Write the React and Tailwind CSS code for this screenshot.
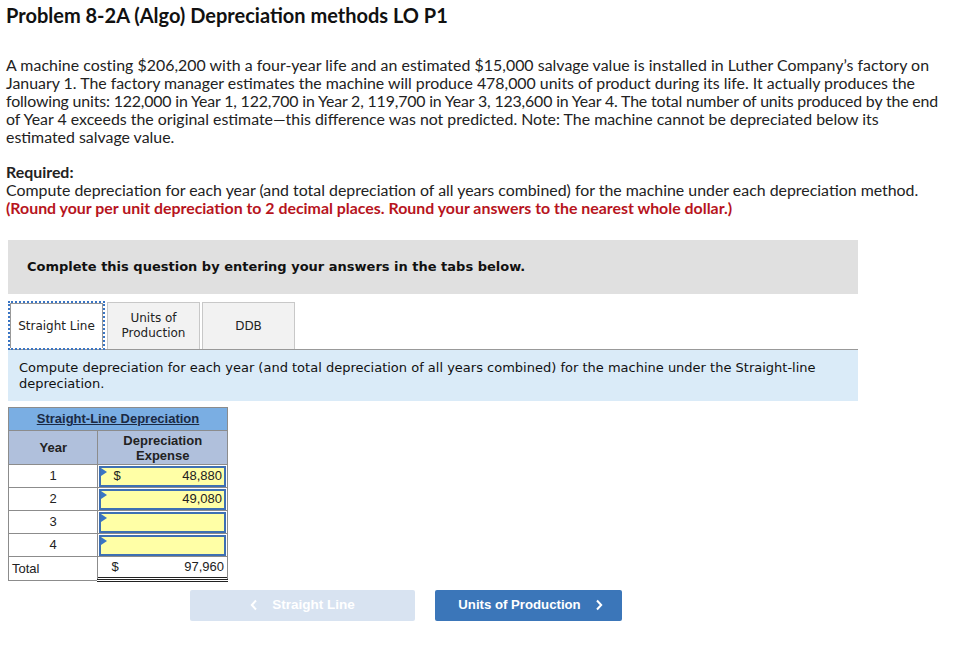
import React from "react";

const proxima = { fontFamily: "Lato, 'Open Sans', sans-serif" };

function Marker() {
  return (
    <span className="absolute left-0 top-0 w-0 h-0 border-t-[4px] border-b-[4px] border-l-[6px] border-t-transparent border-b-transparent border-l-[#3a75c4]" />
  );
}

function InputCell({ dollar, value }) {
  return (
    <td className="relative p-0 border border-[#8c8c8c] h-[23px]">
      <div className="relative mx-[1px] h-[21px] bg-[#ffffa6] border-2 border-[#3e70b3] flex items-center justify-between px-[12px] pr-[2px]">
        <Marker />
        <span>{dollar ? "$" : ""}</span>
        <span>{value}</span>
      </div>
    </td>
  );
}

export default function App() {
  return (
    <div className="bg-white w-[958px] h-[668px] text-[#222]">
      <div className="px-[6px] pt-[3px]" style={proxima}>
        <h1 className="text-[20px] font-bold text-[#111] leading-[24px]">
          Problem 8-2A (Algo) Depreciation methods LO P1
        </h1>
        <div className="mt-[29px] text-[15.9px] leading-[18px] text-[#222] whitespace-nowrap">
          <div className="tracking-[0.03px]">A machine costing $206,200 with a four-year life and an estimated $15,000 salvage value is installed in Luther Company’s factory on</div>
          <div>January 1. The factory manager estimates the machine will produce 478,000 units of product during its life. It actually produces the</div>
          <div className="tracking-[-0.16px]">following units: 122,000 in Year 1, 122,700 in Year 2, 119,700 in Year 3, 123,600 in Year 4. The total number of units produced by the end</div>
          <div>of Year 4 exceeds the original estimate—this difference was not predicted. Note: The machine cannot be depreciated below its</div>
          <div>estimated salvage value.</div>
        </div>
        <div className="mt-[17px] text-[15.9px] leading-[18px] whitespace-nowrap">
          <div className="font-bold">Required:</div>
          <div>
            Compute depreciation for each year (and total depreciation of all years combined) for the machine under each depreciation method.
          </div>
          <div className="font-bold text-[#b7141d]">
            (Round your per unit depreciation to 2 decimal places. Round your answers to the nearest whole dollar.)
          </div>
        </div>
      </div>

      <div className="ml-[8px] w-[850px] mt-[23px]" style={{ fontFamily: "'DejaVu Sans', Verdana, sans-serif" }}>
        <div className="bg-[#e0e0e0] h-[54px] flex items-center pl-[19px]">
          <span className="text-[13px] font-bold text-[#111]">
            Complete this question by entering your answers in the tabs below.
          </span>
        </div>

        <div className="mt-[7px] flex items-end gap-[2px] text-[12px] text-[#222]">
          <div className="border-2 border-dotted border-[#3a75c4] h-[49px] w-[97px] relative -mb-[1px]">
            <div className="absolute inset-0 border border-[#999] border-b-0 bg-white flex items-center justify-center">
              Straight Line
            </div>
          </div>
          <div className="h-[47px] w-[93px] bg-[#f2f2f2] border border-[#c8c8c8] border-b-0 flex items-center justify-center text-center leading-[15px]">
            Units of
            <br />
            Production
          </div>
          <div className="h-[47px] w-[93px] bg-[#f2f2f2] border border-[#c8c8c8] border-b-0 flex items-center justify-center">
            DDB
          </div>
        </div>

        <div className="bg-[#daebf8] border-t border-[#999] h-[52px] pl-[11px] pt-[10px] text-[13px] leading-[16px] text-[#111]">
          Compute depreciation for each year (and total depreciation of all years combined) for the machine under the Straight-line
          <br />
          depreciation.
        </div>
      </div>

      <div className="ml-[8px] mt-[6px]" style={{ fontFamily: "'Liberation Sans', Arial, sans-serif" }}>
        <table className="border-collapse w-[220px] text-[13px] text-[#222]">
          <colgroup>
            <col className="w-[90px]" />
            <col className="w-[130px]" />
          </colgroup>
          <tbody>
            <tr>
              <td colSpan={2} className="bg-[#7aaee3] border border-[#8c8c8c] h-[23px] text-center font-bold text-[13px] underline text-[#1b2a44]">
                Straight-Line Depreciation
              </td>
            </tr>
            <tr className="bg-[#b0c0dc] font-bold text-[13px] text-[#222]">
              <td className="border border-[#8c8c8c] h-[34px] text-center">Year</td>
              <td className="border border-[#8c8c8c] h-[34px] text-center leading-[15px]">
                Depreciation
                <br />
                Expense
              </td>
            </tr>
            <tr>
              <td className="border border-[#8c8c8c] text-center h-[23px]">1</td>
              <InputCell dollar value="48,880" />
            </tr>
            <tr>
              <td className="border border-[#8c8c8c] text-center h-[23px]">2</td>
              <InputCell value="49,080" />
            </tr>
            <tr>
              <td className="border border-[#8c8c8c] text-center h-[23px]">3</td>
              <InputCell value="" />
            </tr>
            <tr>
              <td className="border border-[#8c8c8c] text-center h-[23px]">4</td>
              <InputCell value="" />
            </tr>
            <tr>
              <td className="border border-[#8c8c8c] pl-[3px] h-[22px]">Total</td>
              <td className="border-l border-r border-[#8c8c8c] border-b-[3px] border-b-[#222] border-double h-[22px] p-0">
                <div className="flex justify-between pl-[13px] pr-[3px] border-b-[3px] border-double border-[#222] -mb-[1px]">
                  <span>$</span>
                  <span>97,960</span>
                </div>
              </td>
            </tr>
          </tbody>
        </table>
      </div>

      <div className="ml-[190px] mt-[8px] flex gap-[20px]" style={{ fontFamily: "'Liberation Sans', Arial, sans-serif" }}>
        <button className="w-[225px] h-[31px] bg-[#d8e3f1] rounded-[2px] text-white font-bold text-[13.5px] flex items-center justify-center gap-[14px]">
          <svg width="8" height="12" viewBox="0 0 8 12"><path d="M6 1.5L1.8 6L6 10.5" stroke="white" strokeWidth="2" fill="none" /></svg>
          Straight Line
        </button>
        <button className="w-[187px] h-[31px] bg-[#3b76b9] rounded-[2px] text-white font-bold text-[13.2px] flex items-center justify-center gap-[14px] pl-[4px]">
          Units of Production
          <svg width="8" height="12" viewBox="0 0 8 12"><path d="M2 1.5L6.2 6L2 10.5" stroke="white" strokeWidth="2" fill="none" /></svg>
        </button>
      </div>
    </div>
  );
}
